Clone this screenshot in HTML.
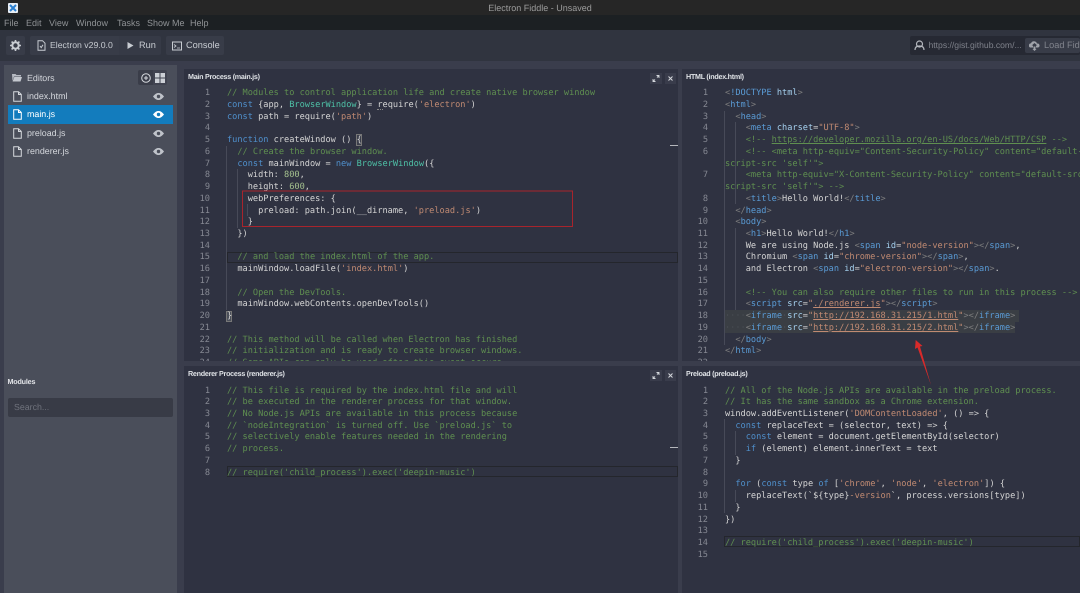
<!DOCTYPE html>
<html><head><meta charset="utf-8"><style>
html,body{margin:0;padding:0;width:1080px;height:593px;overflow:hidden;background:#3a3d4c;font-family:"Liberation Sans",sans-serif;color:#d5d8dd;text-rendering:geometricPrecision}
body{filter:blur(.3px)}
div,span,pre,svg{box-sizing:border-box}
.a{position:absolute}
#tb{left:0;top:0;width:1080px;height:15px;background:#262626}
#mn{left:0;top:15px;width:1080px;height:15px;background:#1c2023;font-size:9px;color:#8f9295}
#mn span{position:absolute;top:2.5px}
#tl{left:0;top:2.5px;width:1080px;text-align:center;font-size:9px;color:#9c9c9c}
#bar{left:0;top:30px;width:1080px;height:31px;background:#30343f}
.btn{position:absolute;background:#383c48;border-radius:2px;height:19px;top:36px;font-size:9.2px;color:#c8ccd2;line-height:19px}
#side{left:4px;top:65px;width:173px;height:528px;background:#4a4e5a}
.row{position:absolute;left:3.5px;width:165.5px;height:19px;font-size:8.9px;line-height:19px;color:#d5d8dd}
.row span{position:absolute;left:19.5px}
.row svg{position:absolute}
.p{position:absolute;background:#2f3241;overflow:hidden}
.h{position:absolute;left:4px;top:3px;font-size:7.2px;letter-spacing:-.28px;font-weight:bold;color:#dfe2e6;line-height:10px;white-space:nowrap}
pre{position:absolute;margin:0;font-family:"DejaVu Sans Mono",monospace;font-size:8.62px;line-height:11.73px;color:#d4d4d4;white-space:pre}
.n{color:#858892;text-align:right;width:30px}
.c{color:#5f8f50}.k{color:#4f8fcb}.s{color:#c08a72}.t{color:#4ec0a6}.g{color:#808080}.b{color:#5a9bd5}.at{color:#a5d0ee}.u{text-decoration:underline}.d{color:#4a4e55}
.cl{position:absolute;border:1px solid #24262c;height:11px}
.ig{position:absolute;width:1px;background:#474a58}
.mk{position:absolute;width:8px;height:1px;background:#b5b7bc}
</style></head><body>
<div id="tb" class="a"></div>
<div id="tl" class="a">Electron Fiddle - Unsaved</div>
<svg class="a" style="left:8px;top:3px" width="10" height="10" viewBox="0 0 10 10"><rect width="10" height="10" rx="1" fill="#e8eef5"/><path d="M2 2L8 8M8 2L2 8" stroke="#2a7fd0" stroke-width="2"/></svg>
<div id="mn" class="a"><span style="left:4px">File</span><span style="left:26px">Edit</span><span style="left:49px">View</span><span style="left:76px">Window</span><span style="left:117px">Tasks</span><span style="left:147px">Show Me</span><span style="left:190px">Help</span></div>
<div id="bar" class="a"></div>

<div class="btn" style="left:6px;width:19px"><svg style="position:absolute;left:4px;top:4px" width="11" height="11" viewBox="0 0 11 11"><circle cx="5.5" cy="5.5" r="3.2" fill="none" stroke="#c8ccd2" stroke-width="2"/><path d="M5.5 0v2M5.5 9v2M0 5.5h2M9 5.5h2M1.6 1.6l1.4 1.4M8 8l1.4 1.4M9.4 1.6L8 3M3 8L1.6 9.4" stroke="#c8ccd2" stroke-width="1.6"/></svg></div>
<div class="btn" style="left:30px;width:89px;border-radius:2px 0 0 2px"><svg style="position:absolute;left:7px;top:4px" width="9" height="11" viewBox="0 0 9 11"><path d="M1 .7h4.5L8 3.2v7H1zM3 6l1.2 1.6L6 4.8" fill="none" stroke="#c8ccd2"/></svg><span style="position:absolute;left:20px;font-size:8.7px;white-space:nowrap">Electron v29.0.0</span></div>
<div class="btn" style="left:119px;width:42px;border-radius:0 2px 2px 0;background:#363a46"><svg style="position:absolute;left:8px;top:6px" width="7" height="7" viewBox="0 0 7 7"><path d="M.5 0L6.5 3.5L.5 7z" fill="#c8ccd2"/></svg><span style="position:absolute;left:20px">Run</span></div>
<div class="btn" style="left:166px;width:58px"><svg style="position:absolute;left:6px;top:4.5px" width="10" height="10" viewBox="0 0 10 10"><rect x=".5" y="1" width="9" height="8" fill="none" stroke="#c8ccd2"/><path d="M2 3.5L4 5L2 6.5M5 7h3" fill="none" stroke="#c8ccd2" stroke-width=".8"/></svg><span style="position:absolute;left:20px">Console</span></div>
<div class="btn" style="left:910px;width:170px;background:#262933;color:#7f828b"><svg style="position:absolute;left:4px;top:4px" width="11" height="11" viewBox="0 0 11 11"><circle cx="5.5" cy="4" r="3" fill="none" stroke="#b5b8be" stroke-width="1.2"/><path d="M1 10c0-3 2-4 4.500-4s4.500 1 4.500 4" fill="none" stroke="#b5b8be" stroke-width="1.2"/></svg><span style="position:absolute;left:18.5px;white-space:nowrap;font-size:8.6px">https://gist.github.com/...</span></div>
<div class="btn" style="left:1025px;width:55px;background:#383c48;color:#80838c;top:38px;height:15px;line-height:15px"><svg style="position:absolute;left:4px;top:2px" width="11" height="11" viewBox="0 0 11 11"><path d="M1 7.500a2.300 2.300 0 0 1 1-4.300a3.200 3.200 0 0 1 6 .4a2 2 0 0 1 1 3.900H7V5.500h1.300L5.500 3L2.700 5.500H4v2z" fill="#a0a3aa"/><path d="M4.500 6.500h2V9h1L5.500 11L3.500 9h1z" fill="#a0a3aa"/></svg><span style="position:absolute;left:19px;white-space:nowrap">Load Fiddle</span></div>

<div id="side" class="a">
<svg class="a" style="left:8px;top:8px" width="10" height="9" viewBox="0 0 10 9"><path d="M0 1h3.500l1 1H9v1.500H2L.5 8z" fill="#b6bac2"/><path d="M2.300 4H10L8.500 8.500H.6z" fill="#c4c8cf"/></svg>
<div class="a" style="left:23px;top:8px;font-size:8.9px;line-height:11px">Editors</div>
<div class="a" style="left:134px;top:5px;width:15px;height:15px;background:#3a3d49;border-radius:2px 0 0 2px"><svg style="position:absolute;left:2.500px;top:2.500px" width="10" height="10" viewBox="0 0 10 10"><circle cx="5" cy="5" r="4.300" fill="none" stroke="#d5d8dd"/><path d="M5 3v4M3 5h4" stroke="#d5d8dd"/></svg></div>
<div class="a" style="left:149px;top:5px;width:14px;height:15px;background:#404350;border-radius:0 2px 2px 0"><svg style="position:absolute;left:2px;top:2.500px" width="10" height="10" viewBox="0 0 10 10"><path d="M0 0h4.500v4.500H0zM5.500 0H10v4.500H5.500zM0 5.500h4.500V10H0zM5.500 5.500H10V10H5.500z" fill="#ccd0d6"/></svg></div>

<div class="row" style="top:22px"><svg style="left:5px;top:4px" width="9" height="11" viewBox="0 0 9 11"><path d="M.7.700h4.800L8.300 3.500v6.800H.7zM5.500.700v2.800h2.800" fill="none" stroke="#d5d8dd"/></svg><span>index.html</span><svg style="left:145px;top:6px" width="11" height="7" viewBox="0 0 11 7"><path d="M0 3.500C2 .8 3.800 0 5.500 0S9 .8 11 3.500C9 6.200 7.200 7 5.500 7S2 6.200 0 3.500z" fill="#bfc3ca"/><circle cx="5.500" cy="3.500" r="1.700" fill="#4a4e5a"/></svg></div>
<div class="row" style="top:40px;height:19px;background:#137cbd;color:#fff"><svg style="left:5px;top:4px" width="9" height="11" viewBox="0 0 9 11"><path d="M.7.700h4.800L8.300 3.500v6.800H.7zM5.500.700v2.800h2.800" fill="none" stroke="#fff"/></svg><span>main.js</span><svg style="left:145px;top:6px" width="11" height="7" viewBox="0 0 11 7"><path d="M0 3.500C2 .8 3.800 0 5.500 0S9 .8 11 3.500C9 6.200 7.200 7 5.500 7S2 6.200 0 3.500z" fill="#fff"/><circle cx="5.500" cy="3.500" r="1.700" fill="#137cbd"/></svg></div>
<div class="row" style="top:59px"><svg style="left:5px;top:4px" width="9" height="11" viewBox="0 0 9 11"><path d="M.7.700h4.800L8.300 3.500v6.800H.7zM5.500.700v2.800h2.800" fill="none" stroke="#d5d8dd"/></svg><span>preload.js</span><svg style="left:145px;top:6px" width="11" height="7" viewBox="0 0 11 7"><path d="M0 3.500C2 .8 3.800 0 5.500 0S9 .8 11 3.500C9 6.200 7.200 7 5.500 7S2 6.200 0 3.500z" fill="#bfc3ca"/><circle cx="5.500" cy="3.500" r="1.700" fill="#4a4e5a"/></svg></div>
<div class="row" style="top:77px"><svg style="left:5px;top:4px" width="9" height="11" viewBox="0 0 9 11"><path d="M.7.700h4.800L8.300 3.500v6.800H.7zM5.500.700v2.800h2.800" fill="none" stroke="#d5d8dd"/></svg><span>renderer.js</span><svg style="left:145px;top:6px" width="11" height="7" viewBox="0 0 11 7"><path d="M0 3.500C2 .8 3.800 0 5.500 0S9 .8 11 3.500C9 6.200 7.200 7 5.500 7S2 6.200 0 3.500z" fill="#bfc3ca"/><circle cx="5.500" cy="3.500" r="1.700" fill="#4a4e5a"/></svg></div>
<div class="a" style="left:3.500px;top:312px;font-size:7.200px;letter-spacing:-.2px;font-weight:bold;color:#e2e4e8;line-height:10px">Modules</div>
<div class="a" style="left:3.500px;top:333px;width:165.500px;height:18.500px;background:#383b46;border-radius:2px;font-size:8.800px;line-height:18.500px;padding-left:6.500px;color:#6f727c">Search...</div>
</div>

<div class="p" style="left:184px;top:69px;width:494px;height:292px">
<div class="h">Main Process (main.js)</div>
<svg class="a" style="left:466px;top:3.500px" width="12" height="11" viewBox="0 0 12 11"><rect width="12" height="11" fill="#393c4b"/><path d="M3 8.500l2-2M7 4.500l2-2M6.500 2.500H9V5M3 6V8.500h2.500" stroke="#d5d8dd" fill="none" stroke-width=".9"/></svg>
<svg class="a" style="left:481px;top:3.500px" width="11" height="11" viewBox="0 0 11 11"><rect width="11" height="11" fill="#393c4b"/><path d="M3.500 3.500l4 4M7.500 3.500l-4 4" stroke="#d5d8dd" stroke-width="1"/></svg>
<div class="ig" style="left:42px;top:77px;height:164px"></div><div class="ig" style="left:53px;top:100px;height:59px"></div><div class="ig" style="left:63px;top:135px;height:12px"></div>
<div class="mk" style="left:486px;top:75.500px"></div>
<div class="cl" style="left:43px;top:182.500px;width:451px"></div>
<div class="a" style="left:42px;top:242px;width:6px;height:11px;background:#4b4f5a;border:1px solid #777"></div>
<div class="a" style="left:172px;top:65px;width:6px;height:12px;background:#3b3e4b;border:1px solid #777"></div>
<div class="a" style="left:193px;top:39.500px;width:6px;border-top:1px dotted #888"></div>
<pre class="n" style="left:-4px;top:19.200px">1
2
3
4
5
6
7
8
9
10
11
12
13
14
15
16
17
18
19
20
21
22
23
24</pre>
<pre style="left:43px;top:19.200px"><span class="c">// Modules to control application life and create native browser window</span>
<span class="k">const</span> {app, <span class="t">BrowserWindow</span>} = require(<span class="s">'electron'</span>)
<span class="k">const</span> path = require(<span class="s">'path'</span>)

<span class="k">function</span> createWindow () {
  <span class="c">// Create the browser window.</span>
  <span class="k">const</span> mainWindow = <span class="k">new</span> <span class="t">BrowserWindow</span>({
    width: <span class="c" style="color:#a5c28f">800</span>,
    height: <span class="c" style="color:#a5c28f">600</span>,
    webPreferences: {
      preload: path.join(__dirname, <span class="s">'preload.js'</span>)
    }
  })

  <span class="c">// and load the index.html of the app.</span>
  mainWindow.loadFile(<span class="s">'index.html'</span>)

  <span class="c">// Open the DevTools.</span>
  mainWindow.webContents.openDevTools()
}

<span class="c">// This method will be called when Electron has finished</span>
<span class="c">// initialization and is ready to create browser windows.</span>
<span class="c">// Some APIs can only be used after this event occurs.</span></pre>
</div>

<div class="p" style="left:682px;top:69px;width:398px;height:292px">
<div class="h">HTML (index.html)</div>
<div class="ig" style="left:42px;top:42px;height:234px"></div><div class="ig" style="left:53px;top:53px;height:82px"></div><div class="ig" style="left:53px;top:159px;height:105px"></div>
<div class="a" style="left:43px;top:241px;width:294px;height:11.500px;background:#3a3e44"></div>
<div class="a" style="left:43px;top:252.500px;width:290px;height:11px;background:#3a3e44"></div>
<pre class="n" style="left:-4px;top:19.200px">1
2
3
4
5
6

7

8
9
10
11
12
13
14
15
16
17
18
19
20
21
22</pre>
<pre style="left:43px;top:19.200px"><span class="g">&lt;</span><span class="b">!DOCTYPE</span> <span class="at">html</span><span class="g">&gt;</span>
<span class="g">&lt;</span><span class="b">html</span><span class="g">&gt;</span>
  <span class="g">&lt;</span><span class="b">head</span><span class="g">&gt;</span>
    <span class="g">&lt;</span><span class="b">meta</span> <span class="at">charset</span>=<span class="s">"UTF-8"</span><span class="g">&gt;</span>
    <span class="c">&lt;!-- <span class="u">https://developer.mozilla.org/en-US/docs/Web/HTTP/CSP</span> --&gt;</span>
    <span class="c">&lt;!-- &lt;meta http-equiv="Content-Security-Policy" content="default-src 'self';</span>
<span class="c">script-src 'self'"&gt;</span>
    <span class="c">&lt;meta http-equiv="X-Content-Security-Policy" content="default-src 'self';</span>
<span class="c">script-src 'self'"&gt; --&gt;</span>
    <span class="g">&lt;</span><span class="b">title</span><span class="g">&gt;</span>Hello World!<span class="g">&lt;/</span><span class="b">title</span><span class="g">&gt;</span>
  <span class="g">&lt;/</span><span class="b">head</span><span class="g">&gt;</span>
  <span class="g">&lt;</span><span class="b">body</span><span class="g">&gt;</span>
    <span class="g">&lt;</span><span class="b">h1</span><span class="g">&gt;</span>Hello World!<span class="g">&lt;/</span><span class="b">h1</span><span class="g">&gt;</span>
    We are using Node.js <span class="g">&lt;</span><span class="b">span</span> <span class="at">id</span>=<span class="s">"node-version"</span><span class="g">&gt;&lt;/</span><span class="b">span</span><span class="g">&gt;</span>,
    Chromium <span class="g">&lt;</span><span class="b">span</span> <span class="at">id</span>=<span class="s">"chrome-version"</span><span class="g">&gt;&lt;/</span><span class="b">span</span><span class="g">&gt;</span>,
    and Electron <span class="g">&lt;</span><span class="b">span</span> <span class="at">id</span>=<span class="s">"electron-version"</span><span class="g">&gt;&lt;/</span><span class="b">span</span><span class="g">&gt;</span>.

    <span class="c">&lt;!-- You can also require other files to run in this process --&gt;</span>
    <span class="g">&lt;</span><span class="b">script</span> <span class="at">src</span>=<span class="s">"<span class="u">./renderer.js</span>"</span><span class="g">&gt;&lt;/</span><span class="b">script</span><span class="g">&gt;</span>
<span class="d">····</span><span class="g">&lt;</span><span class="b">iframe</span><span class="d">·</span><span class="at">src</span>=<span class="s">"<span class="u">http://192.168.31.215/1.html</span>"</span><span class="g">&gt;&lt;/</span><span class="b">iframe</span><span class="g">&gt;</span>
<span class="d">····</span><span class="g">&lt;</span><span class="b">iframe</span><span class="d">·</span><span class="at">src</span>=<span class="s">"<span class="u">http://192.168.31.215/2.html</span>"</span><span class="g">&gt;&lt;/</span><span class="b">iframe</span><span class="g">&gt;</span>
  <span class="g">&lt;/</span><span class="b">body</span><span class="g">&gt;</span>
<span class="g">&lt;/</span><span class="b">html</span><span class="g">&gt;</span></pre>
</div>

<div class="p" style="left:184px;top:366px;width:494px;height:227px">
<div class="h">Renderer Process (renderer.js)</div>
<svg class="a" style="left:466px;top:3.500px" width="12" height="11" viewBox="0 0 12 11"><rect width="12" height="11" fill="#393c4b"/><path d="M3 8.500l2-2M7 4.500l2-2M6.500 2.500H9V5M3 6V8.500h2.500" stroke="#d5d8dd" fill="none" stroke-width=".9"/></svg>
<svg class="a" style="left:481px;top:3.500px" width="11" height="11" viewBox="0 0 11 11"><rect width="11" height="11" fill="#393c4b"/><path d="M3.500 3.500l4 4M7.500 3.500l-4 4" stroke="#d5d8dd" stroke-width="1"/></svg>
<div class="mk" style="left:486px;top:80.500px"></div>
<div class="cl" style="left:43px;top:100px;width:451px"></div>
<pre class="n" style="left:-4px;top:19.500px">1
2
3
4
5
6
7
8</pre>
<pre class="c" style="left:43px;top:19.500px;color:#5f8f50">// This file is required by the index.html file and will
// be executed in the renderer process for that window.
// No Node.js APIs are available in this process because
// `nodeIntegration` is turned off. Use `preload.js` to
// selectively enable features needed in the rendering
// process.

// require('child_process').exec('deepin-music')</pre>
</div>

<div class="p" style="left:682px;top:366px;width:398px;height:227px">
<div class="h">Preload (preload.js)</div>
<div class="ig" style="left:42px;top:53px;height:94px"></div><div class="ig" style="left:53px;top:65px;height:23.500px"></div><div class="ig" style="left:53px;top:124px;height:12px"></div>
<div class="cl" style="left:42px;top:170px;width:356px"></div>
<pre class="n" style="left:-4px;top:19.500px">1
2
3
4
5
6
7
8
9
10
11
12
13
14
15</pre>
<pre style="left:43px;top:19.500px"><span class="c">// All of the Node.js APIs are available in the preload process.</span>
<span class="c">// It has the same sandbox as a Chrome extension.</span>
window.addEventListener(<span class="s">'DOMContentLoaded'</span>, () =&gt; {
  <span class="k">const</span> replaceText = (selector, text) =&gt; {
    <span class="k">const</span> element = document.getElementById(selector)
    <span class="k">if</span> (element) element.innerText = text
  }

  <span class="k">for</span> (<span class="k">const</span> type <span class="k">of</span> [<span class="s">'chrome'</span>, <span class="s">'node'</span>, <span class="s">'electron'</span>]) {
    replaceText(`${type}<span class="s">-version</span>`, process.versions[type])
  }
})

<span class="c">// require('child_process').exec('deepin-music')</span>
</pre>
</div>

<svg class="a" style="left:0;top:0" width="1080" height="593" viewBox="0 0 1080 593">
<rect x="242.500" y="191" width="330" height="35.500" fill="none" stroke="#a8242c" stroke-width="1"/>
<path d="M915.700 340L922.500 346L920 346.500L931 385L917.500 347.500L915 349z" fill="#d92a2a"/>
</svg>
</body></html>
